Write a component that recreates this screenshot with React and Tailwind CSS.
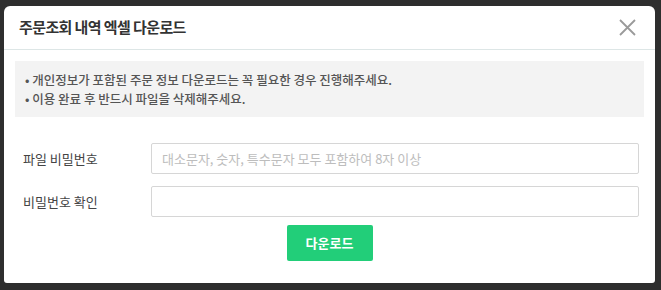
import React from 'react'

const FONT = { fontFamily: '"Noto Sans CJK KR", "Noto Sans", sans-serif' }

function CloseIcon() {
  return (
    <svg width="17" height="17" viewBox="0 0 17 17" fill="none">
      <path d="M1 1L16 16M16 1L1 16" stroke="#9a9a9a" strokeWidth="1.8" />
    </svg>
  )
}

function Field({ label, placeholder }) {
  return (
    <div className="flex items-center">
      <label className="w-[136px] pl-[8px] text-[13px] text-[#444]">{label}</label>
      <input
        type="password"
        placeholder={placeholder}
        className="h-[31px] w-[488px] border border-[#d6d6d6] rounded-[2px] px-[10px] text-[13px] text-[#333] placeholder:text-[#bdbdbd] outline-none"
      />
    </div>
  )
}

export default function App() {
  return (
    <div className="min-h-[290px] w-[661px] bg-[#2e2e2e] pt-[6px] pl-[4px]" style={FONT}>
      <div className="w-[651px] h-[277px] bg-white rounded-t-[6px] rounded-b-[3px] flex flex-col">
        {/* header */}
        <div className="h-[44px] flex items-center justify-between pl-[15px] pr-[19px] border-b border-[#dde6e6]">
          <h2 className="text-[15px] font-bold text-[#333] tracking-[-0.6px]">주문조회 내역 엑셀 다운로드</h2>
          <button className="p-0"><CloseIcon /></button>
        </div>

        {/* body */}
        <div className="px-[11px] pt-[11px]">
          <div className="bg-[#f3f3f3] h-[56px] px-[10px] flex flex-col justify-center gap-[1px] text-[12.5px] font-medium text-[#555] leading-[18px]">
            <p>• 개인정보가 포함된 주문 정보 다운로드는 꼭 필요한 경우 진행해주세요.</p>
            <p>• 이용 완료 후 반드시 파일을 삭제해주세요.</p>
          </div>

          <div className="mt-[26px] flex flex-col gap-[12px]">
            <Field label="파일 비밀번호" placeholder="대소문자, 숫자, 특수문자 모두 포함하여 8자 이상" />
            <Field label="비밀번호 확인" placeholder="" />
          </div>

          <div className="flex justify-center mt-[8px]">
            <button className="w-[86px] h-[36px] rounded-[2px] bg-[#22ce79] text-white text-[13px] font-bold">
              다운로드
            </button>
          </div>
        </div>
      </div>
    </div>
  )
}
